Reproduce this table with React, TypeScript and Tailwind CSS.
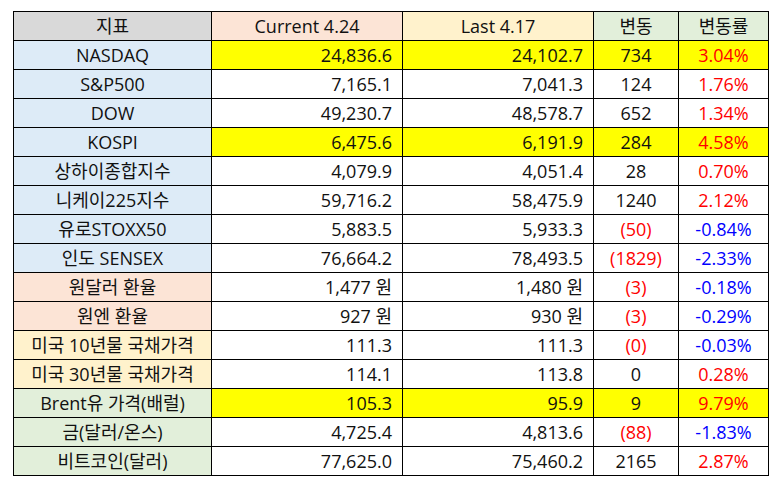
const rows: {
  name: string
  bg: string
  cur: string
  last: string
  diff: string
  rate: string
  hl?: boolean
}[] = [
  { name: 'NASDAQ', bg: 'bg-[#ddebf7]', cur: '24,836.6', last: '24,102.7', diff: '734', rate: '3.04%', hl: true },
  { name: 'S&P500', bg: 'bg-[#ddebf7]', cur: '7,165.1', last: '7,041.3', diff: '124', rate: '1.76%' },
  { name: 'DOW', bg: 'bg-[#ddebf7]', cur: '49,230.7', last: '48,578.7', diff: '652', rate: '1.34%' },
  { name: 'KOSPI', bg: 'bg-[#ddebf7]', cur: '6,475.6', last: '6,191.9', diff: '284', rate: '4.58%', hl: true },
  { name: '상하이종합지수', bg: 'bg-[#ddebf7]', cur: '4,079.9', last: '4,051.4', diff: '28', rate: '0.70%' },
  { name: '니케이225지수', bg: 'bg-[#ddebf7]', cur: '59,716.2', last: '58,475.9', diff: '1240', rate: '2.12%' },
  { name: '유로STOXX50', bg: 'bg-[#ddebf7]', cur: '5,883.5', last: '5,933.3', diff: '(50)', rate: '-0.84%' },
  { name: '인도 SENSEX', bg: 'bg-[#ddebf7]', cur: '76,664.2', last: '78,493.5', diff: '(1829)', rate: '-2.33%' },
  { name: '원달러 환율', bg: 'bg-[#fce4d6]', cur: '1,477 원', last: '1,480 원', diff: '(3)', rate: '-0.18%' },
  { name: '원엔 환율', bg: 'bg-[#fce4d6]', cur: '927 원', last: '930 원', diff: '(3)', rate: '-0.29%' },
  { name: '미국 10년물 국채가격', bg: 'bg-[#fff2cc]', cur: '111.3', last: '111.3', diff: '(0)', rate: '-0.03%' },
  { name: '미국 30년물 국채가격', bg: 'bg-[#fff2cc]', cur: '114.1', last: '113.8', diff: '0', rate: '0.28%' },
  { name: 'Brent유 가격(배럴)', bg: 'bg-[#e2efda]', cur: '105.3', last: '95.9', diff: '9', rate: '9.79%', hl: true },
  { name: '금(달러/온스)', bg: 'bg-[#e2efda]', cur: '4,725.4', last: '4,813.6', diff: '(88)', rate: '-1.83%' },
  { name: '비트코인(달러)', bg: 'bg-[#e2efda]', cur: '77,625.0', last: '75,460.2', diff: '2165', rate: '2.87%' },
]

const cell = 'border border-black h-[29px] p-0 leading-none whitespace-nowrap'

export default function App() {
  return (
    <div
      className="w-[781px] h-[485px] bg-white pl-[13px] pt-[11px] text-[18px] text-[#111]"
      style={{ fontFamily: '"Open Sans", "Noto Sans CJK KR", sans-serif' }}
    >
      <table className="border-collapse table-fixed w-[755px]">
        <colgroup>
          <col className="w-[198px]" />
          <col className="w-[191px]" />
          <col className="w-[191px]" />
          <col className="w-[85px]" />
          <col className="w-[90px]" />
        </colgroup>
        <thead>
          <tr>
            <th className={`${cell} font-normal bg-[#d9d9d9]`}>지표</th>
            <th className={`${cell} font-normal bg-[#fce4d6]`}>Current 4.24</th>
            <th className={`${cell} font-normal bg-[#fff2cc]`}>Last 4.17</th>
            <th className={`${cell} font-normal bg-[#e2efda]`}>변동</th>
            <th className={`${cell} font-normal bg-[#e2efda]`}>변동률</th>
          </tr>
        </thead>
        <tbody>
          {rows.map((r) => {
            const neg = r.diff.startsWith('(')
            const rateNeg = r.rate.startsWith('-')
            const fill = r.hl ? 'bg-[#ffff00]' : 'bg-white'
            return (
              <tr key={r.name}>
                <td className={`${cell} ${r.bg} text-center`}>{r.name}</td>
                <td className={`${cell} ${fill} text-right pr-[10px]`}>{r.cur}</td>
                <td className={`${cell} ${fill} text-right pr-[10px]`}>{r.last}</td>
                <td className={`${cell} ${fill} text-center ${neg ? 'text-[#ff0000]' : ''}`}>{r.diff}</td>
                <td className={`${cell} ${fill} text-center ${rateNeg ? 'text-[#0000ff]' : 'text-[#ff0000]'}`}>
                  {r.rate}
                </td>
              </tr>
            )
          })}
        </tbody>
      </table>
    </div>
  )
}
